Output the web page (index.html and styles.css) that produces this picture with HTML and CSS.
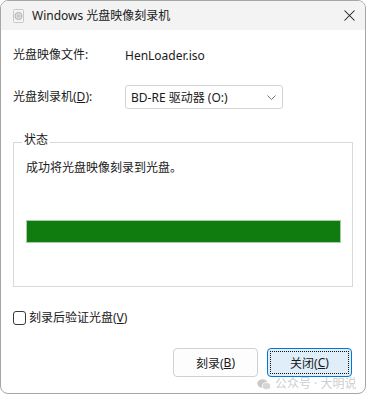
FILE: index.html
```html
<!DOCTYPE html>
<html lang="zh-CN">
<head>
<meta charset="utf-8">
<link rel="stylesheet" href="styles.css">
</head>
<body>
<div class="window">
  <div class="titlebar">
    <svg class="app-icon" width="11" height="14" viewBox="0 0 11 14">
      <rect x="0.5" y="0.5" width="10" height="13" rx="1" fill="#f4f4f4" stroke="#c8c8c8"/>
      <circle cx="5.5" cy="7" r="3.6" fill="#dcdcdc" stroke="#a9a9a9" stroke-width="0.8"/>
      <circle cx="5.5" cy="7" r="1" fill="#fff" stroke="#999" stroke-width="0.6"/>
    </svg>
    <span class="title">Windows 光盘映像刻录机</span>
    <svg class="close" width="11" height="11" viewBox="0 0 11 11">
      <path d="M0.5 0.5 L10.5 10.5 M10.5 0.5 L0.5 10.5" stroke="#1b1b1b" stroke-width="1.05"/>
    </svg>
  </div>
  <div class="content">
    <div class="row row-file">
      <span class="label">光盘映像文件:</span>
      <span class="value">HenLoader.iso</span>
    </div>
    <div class="row row-drive">
      <span class="label">光盘刻录机(<u>D</u>):</span>
      <div class="select">
        <span>BD-RE 驱动器 (O:)</span>
        <svg width="9" height="5" viewBox="0 0 9 5"><path d="M0.5 0.5 L4.5 4.5 L8.5 0.5" fill="none" stroke="#666" stroke-width="0.9"/></svg>
      </div>
    </div>
    <div class="group">
      <div class="group-label">状态</div>
      <div class="status">成功将光盘映像刻录到光盘。</div>
      <div class="progress"><div class="progress-fill" style="width:100%"></div></div>
    </div>
    <label class="check-row">
      <span class="checkbox"></span>
      <span>刻录后验证光盘(<u>V</u>)</span>
    </label>
    <div class="buttons">
      <div class="btn">刻录(<u>B</u>)</div>
      <div class="btn btn-default"><span class="focus">关闭(<u>C</u>)</span></div>
    </div>
  </div>
  <div class="watermark">
    <svg width="14" height="11" viewBox="0 0 14 11"><ellipse cx="5.5" cy="4.5" rx="5.2" ry="4.2" fill="#c9c9c9"/><ellipse cx="9.5" cy="7" rx="4.2" ry="3.5" fill="#d6d6d6" stroke="#fff" stroke-width="0.8"/></svg>
    <span>公众号 · 大明说</span>
  </div>
</div>
</body>
</html>
```
FILE: styles.css
```css
* { box-sizing: border-box; }
html, body { margin: 0; padding: 0; background: #ffffff; }
body {
  font-family: "Noto Sans", "Noto Sans CJK SC", sans-serif;
  font-size: 12px;
  color: #1a1a1a;
}
u { text-decoration: underline; text-underline-offset: 1px; }
.window {
  position: relative;
  width: 366px;
  height: 394px;
  border: 1px solid #a6a6a6;
  border-radius: 8px;
  background: #ffffff;
  overflow: hidden;
  display: flex;
  flex-direction: column;
}
.titlebar {
  height: 29px;
  background: #f3f3f3;
  display: flex;
  align-items: center;
  padding-left: 12px;
  flex-shrink: 0;
}
.app-icon { margin-right: 8px; }
.title { font-size: 12px; color: #1a1a1a; line-height: 16px; }
.close { margin-left: auto; margin-right: 10px; }
.content {
  padding: 0 13px 0 12px;
  display: flex;
  flex-direction: column;
}
.row { display: flex; align-items: center; }
.label { width: 112px; flex-shrink: 0; line-height: 16px; }
.row-file { margin-top: 17px; height: 16px; }
.row-drive { margin-top: 22px; }
.select {
  width: 158px;
  height: 24px;
  border: 1px solid #d4d4d4;
  border-radius: 3px;
  display: flex;
  align-items: center;
  justify-content: space-between;
  padding: 0 6px 0 5px;
  background: #fff;
}
.group {
  margin-top: 33px;
  width: 340px;
  border: 1px solid #d9d9d9;
  padding: 0 11px 43px 12px;
}
.group-label {
  width: fit-content;
  margin-top: -11px;
  margin-left: -4px;
  padding: 0 2px;
  background: #fff;
  line-height: 16px;
}
.status { margin-top: 12px; line-height: 16px; }
.progress {
  margin-top: 44px;
  height: 23px;
  border: 1px solid #a5cfa5;
  background: #e6e6e6;
}
.progress-fill { height: 100%; background: #107c10; }
.check-row {
  margin-top: 23px;
  display: flex;
  align-items: center;
  line-height: 16px;
}
.checkbox {
  width: 13px;
  height: 14px;
  border: 1px solid #3a3a3a;
  border-radius: 3px;
  margin-right: 3px;
  background: #fff;
}
.buttons {
  margin-top: 22px;
  display: flex;
  justify-content: flex-end;
  gap: 9px;
}
.btn {
  width: 85px;
  height: 29px;
  border: 1px solid #d0d0d0;
  border-radius: 4px;
  background: #fdfdfd;
  display: flex;
  align-items: center;
  justify-content: center;
}
.btn-default {
  background: #e0eef9;
  border-color: #0078d4;
  padding: 2px;
}
.focus {
  width: 100%;
  height: 100%;
  border: 1px dotted #111;
  display: flex;
  align-items: center;
  justify-content: center;
}
.watermark {
  position: absolute;
  left: 256px;
  top: 376px;
  display: flex;
  align-items: center;
  gap: 4px;
  color: rgba(160,160,160,0.55);
  font-size: 12px;
  line-height: 14px;
}
```
